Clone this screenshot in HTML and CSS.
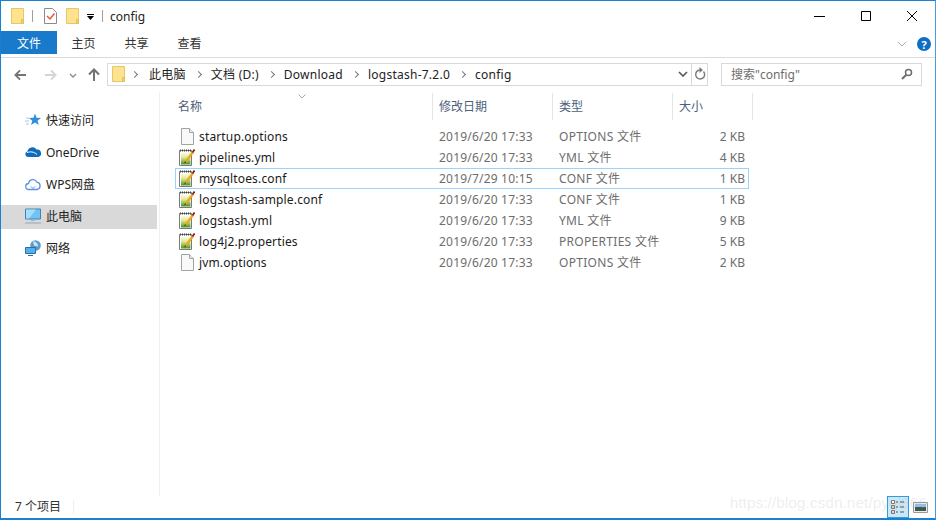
FILE: index.html
```html
<!DOCTYPE html>
<html lang="zh-CN">
<head>
  <meta charset="UTF-8" />
  <title>config</title>
  <link rel="stylesheet" href="styles.css">
</head>
<body>
  <svg class="defs" width="0" height="0">
    <defs>
      <linearGradient id="paper" x1="0" y1="0" x2="0" y2="1">
        <stop offset="0" stop-color="#fbfbe6"/>
        <stop offset="0.4" stop-color="#dfe88f"/>
        <stop offset="1" stop-color="#3f9426"/>
      </linearGradient>
    </defs>
    <symbol id="folder" viewBox="0 0 13 16">
      <path d="M.5.500h12v15H.5z" fill="#fde28f" stroke="#e8c766"/>
      <path d="M10.500 11.500h2v4h-2z" fill="#f6d46f" stroke="#e2bd58"/>
    </symbol>
    <symbol id="plain" viewBox="0 0 13 17">
      <path d="M.5.500h8l4 4v12H.5z" fill="#f9f9f9" stroke="#a3a3a3"/>
      <path d="M8.500.5v4h4" fill="#eee" stroke="#a3a3a3"/>
    </symbol>
    <symbol id="note" viewBox="0 0 16 17">
      <path d="M.5 1.500h12v15H.5z" fill="#fff" stroke="#7a7a7a"/>
      <path d="M1 1.500h11" stroke="#444" stroke-dasharray="1 1" stroke-width="2"/>
      <path d="M2 4h9.500v11.500H2z" fill="url(#paper)"/>
      <path d="M6.500 13L14 3" stroke="#eda81f" stroke-width="2.400"/>
      <path d="M6 12l-.8 2.500 2.200-1.200z" fill="#5a3a1a"/>
      <path d="M13.500 3.500L15.500.5" stroke="#8a1f1f" stroke-width="1.800"/>
    </symbol>
  </svg>

  <div class="window">
    <!-- title bar -->
    <div class="titlebar">
      <svg class="ico-folder"><use href="#folder"/></svg>
      <span class="qsep"></span>
      <svg class="ico-check" viewBox="0 0 13 16">
        <path d="M.5.500h8l4 4v11H.5z" fill="#fff" stroke="#8a8a8a"/>
        <path d="M3 8l3 3 4.500-5.500" fill="none" stroke="#e4572e" stroke-width="1.400"/>
      </svg>
      <svg class="ico-folder second"><use href="#folder"/></svg>
      <svg class="ico-drop" viewBox="0 0 7 6">
        <path d="M0 .5h7" stroke="#000"/>
        <path d="M0 2h7L3.500 6z" fill="#000"/>
      </svg>
      <span class="qsep"></span>
      <span class="title">config</span>
      <div class="winbtns">
        <svg viewBox="0 0 12 12"><path d="M0 6.500h11" stroke="#000"/></svg>
        <svg viewBox="0 0 12 12"><path d="M1.500 1.500h9v9h-9z" fill="none" stroke="#000"/></svg>
        <svg viewBox="0 0 12 12"><path d="M1 1l10 10M11 1L1 11" stroke="#000" fill="none"/></svg>
      </div>
    </div>

    <!-- ribbon tabs -->
    <div class="tabs">
      <span class="tab file">文件</span>
      <span class="tab home">主页</span>
      <span class="tab share">共享</span>
      <span class="tab view">查看</span>
      <svg class="collapse" viewBox="0 0 10 6"><path d="M1 1l4 4 4-4" fill="none" stroke="#a6a6a6" stroke-width="1"/></svg>
      <span class="help">?</span>
    </div>

    <!-- address row -->
    <div class="navrow">
      <svg class="arrow" viewBox="0 0 14 12"><path d="M13 6H2M6.500 1L1.500 6l5 5" fill="none" stroke="#737373" stroke-width="2"/></svg>
      <svg class="arrow off" viewBox="0 0 14 12"><path d="M1 6h11M7.500 1l5 5-5 5" fill="none" stroke="#d4d4d4" stroke-width="2"/></svg>
      <svg class="recent" viewBox="0 0 8 5"><path d="M1 1l3 3 3-3" fill="none" stroke="#8a8a8a" stroke-width="1.300"/></svg>
      <svg class="arrow up" viewBox="0 0 12 14"><path d="M6 13V2M1 6.500l5-5 5 5" fill="none" stroke="#737373" stroke-width="2"/></svg>
      <div class="address">
        <svg class="ico-folder"><use href="#folder"/></svg>
        <span class="chev"></span><span class="crumb">此电脑</span>
        <span class="chev"></span><span class="crumb">文档 (D:)</span>
        <span class="chev"></span><span class="crumb">Download</span>
        <span class="chev"></span><span class="crumb">logstash-7.2.0</span>
        <span class="chev"></span><span class="crumb">config</span>
        <svg class="addr-drop" viewBox="0 0 10 6"><path d="M1 1l4 4 4-4" fill="none" stroke="#555" stroke-width="1.600"/></svg>
        <span class="refresh">
          <svg viewBox="0 0 12 14"><path d="M9.500 4.500A4.500 4.500 0 1 1 6 3H8" fill="none" stroke="#7d7d7d" stroke-width="1.500"/><path d="M5.500 0v6L9 3z" fill="#7d7d7d"/></svg>
        </span>
      </div>
      <div class="search">
        <span>搜索"config"</span>
        <svg viewBox="0 0 12 12"><circle cx="7.500" cy="4.500" r="3" fill="none" stroke="#6e6e6e" stroke-width="1.500"/><path d="M5.300 6.700L1 11" stroke="#6e6e6e" stroke-width="2"/></svg>
      </div>
    </div>

    <div class="body">
      <!-- left nav -->
      <nav class="sidebar">
        <div class="navitem">
          <svg viewBox="0 0 16 16"><path d="M10 1.500l1.500 4.300L16 6l-3.500 2.700L13.800 13 10 10.500 6 13l1.300-4.300L4 6l4.500-.2z" fill="#2e8fdc"/><path d="M1 6h3M0 9h4M1 12h3" stroke="#9cc9ec"/></svg>
          <span>快速访问</span>
        </div>
        <div class="navitem">
          <svg viewBox="0 0 16 12"><path d="M3 11a2.800 2.800 0 0 1-.6-5.500A5 5 0 0 1 11.500 3.500 3.800 3.800 0 0 1 13 11z" fill="#0f6cbd"/><path d="M2 6.500c3-1 7-1 10 2" stroke="#fff" fill="none"/></svg>
          <span>OneDrive</span>
        </div>
        <div class="navitem">
          <svg viewBox="0 0 16 13"><path d="M4 12a3 3 0 0 1-.5-6A4.500 4.500 0 0 1 12 4.700 3.700 3.700 0 0 1 12 12z" fill="#fff" stroke="#5b92e5" stroke-width="1.300"/><path d="M6 9l2 2 2-2" fill="none" stroke="#5b92e5"/></svg>
          <span>WPS网盘</span>
        </div>
        <div class="navitem current">
          <svg viewBox="0 0 16 15"><path d="M.5.500h15v10H.5z" fill="#6cc4f7" stroke="#4a7fa8"/><path d="M1 1h10L4 10H1z" fill="#a3defc"/><path d="M6 11h4v1.500H6z" fill="#9fb6c8"/><path d="M0 14.500h16" stroke="#8fa9bd"/></svg>
          <span>此电脑</span>
        </div>
        <div class="navitem">
          <svg viewBox="0 0 16 16"><circle cx="10.500" cy="5.500" r="5.300" fill="#5b9bd0"/><path d="M8 1.500c3 0 5 2 5 5l-4-1z" fill="#cfe6f6"/><path d="M.5 7.500h10v6H.5z" fill="#4fb2ee" stroke="#2f6f9f"/><path d="M3 15.500h5" stroke="#2f6f9f"/></svg>
          <span>网络</span>
        </div>
      </nav>

      <!-- file list -->
      <main class="files">
        <svg class="sort" viewBox="0 0 8 5"><path d="M.5.500L4 4 7.500.5" fill="none" stroke="#a8a8a8"/></svg>
        <div class="head">
          <span>名称</span>
          <span>修改日期</span>
          <span>类型</span>
          <span>大小</span>
        </div>
        <div class="rows">
          <div class="row"><span class="name"><svg class="ico-plain"><use href="#plain"/></svg>startup.options</span><span class="cell">2019/6/20 17:33</span><span class="cell">OPTIONS 文件</span><span class="size">2 KB</span></div>
          <div class="row"><span class="name"><svg class="ico-note"><use href="#note"/></svg>pipelines.yml</span><span class="cell">2019/6/20 17:33</span><span class="cell">YML 文件</span><span class="size">4 KB</span></div>
          <div class="row focused"><span class="name"><svg class="ico-note"><use href="#note"/></svg>mysqltoes.conf</span><span class="cell">2019/7/29 10:15</span><span class="cell">CONF 文件</span><span class="size">1 KB</span></div>
          <div class="row"><span class="name"><svg class="ico-note"><use href="#note"/></svg>logstash-sample.conf</span><span class="cell">2019/6/20 17:33</span><span class="cell">CONF 文件</span><span class="size">1 KB</span></div>
          <div class="row"><span class="name"><svg class="ico-note"><use href="#note"/></svg>logstash.yml</span><span class="cell">2019/6/20 17:33</span><span class="cell">YML 文件</span><span class="size">9 KB</span></div>
          <div class="row"><span class="name"><svg class="ico-note"><use href="#note"/></svg>log4j2.properties</span><span class="cell">2019/6/20 17:33</span><span class="cell">PROPERTIES 文件</span><span class="size">5 KB</span></div>
          <div class="row"><span class="name"><svg class="ico-plain"><use href="#plain"/></svg>jvm.options</span><span class="cell">2019/6/20 17:33</span><span class="cell">OPTIONS 文件</span><span class="size">2 KB</span></div>
        </div>
      </main>
    </div>

    <!-- status bar -->
    <div class="status">
      <span class="count">7 个项目</span>
      <span class="view-btn active">
        <svg viewBox="0 0 16 16"><path d="M1.500 1.500h3v3h-3zM1.500 6.500h3v3h-3zM1.500 11.500h3v3h-3z" fill="#fff" stroke="#777"/><path d="M2.500 8h1M2.500 13h1" stroke="#d33"/><path d="M6 3h2M10 3h4M6 8h2M10 8h4M6 13h2M10 13h4" stroke="#555"/></svg>
      </span>
      <span class="view-btn">
        <svg viewBox="0 0 15 11"><path d="M.5.500h14v10H.5z" fill="#e8eef2" stroke="#999"/><path d="M2 2h11v3H2z" fill="#8cc4ec"/><path d="M2 5h11v4H2z" fill="#3f5a4a"/></svg>
      </span>
    </div>
    <span class="watermark">https://blog.csdn.net/pyql866</span>
  </div>
</body>
</html>
```

FILE: styles.css
```css
* {
  box-sizing: border-box;
}

body {
  margin: 0;
  font-family: "Noto Sans", "Noto Sans CJK SC", sans-serif;
  font-size: 12px;
  color: #1a1a1a;
  background-color: #fff;
}

.defs {
  position: absolute;
}

svg {
  display: block;
  flex: none;
}

/* window frame */
.window {
  position: relative;
  display: flex;
  flex-direction: column;
  width: 936px;
  height: 520px;
  overflow: hidden;
  border: 1px solid #1a80d2;
  border-bottom-width: 2px;
  border-right-color: #4a9ade;
}

/* title bar */
.titlebar {
  display: flex;
  align-items: center;
  height: 30px;
  padding-left: 10px;
}
.ico-folder {
  width: 13px;
  height: 16px;
}
.ico-folder.second {
  margin-left: 9px;
}
.ico-check {
  width: 13px;
  height: 16px;
  margin-left: 11px;
}
.ico-drop {
  width: 7px;
  height: 6px;
  margin-left: 8px;
  margin-top: 2px;
}
.qsep {
  width: 1px;
  height: 12px;
  margin-left: 8px;
  background-color: #a0a0a0;
}
.title {
  margin-left: 7px;
  color: #222;
}
.winbtns {
  display: flex;
  gap: 34px;
  margin-left: auto;
  margin-right: 17px;
}
.winbtns svg {
  width: 12px;
  height: 12px;
}

/* ribbon tabs */
.tabs {
  display: flex;
  align-items: center;
  height: 27px;
  padding-bottom: 3px;
  border-bottom: 1px solid #dadbdc;
}
.tab {
  display: flex;
  align-items: center;
  justify-content: center;
  width: 53px;
  height: 23px;
  color: #333;
}
.tab.file {
  width: 56px;
  color: #fff;
  background-color: #1979ca;
}
.collapse {
  width: 10px;
  height: 6px;
  margin-top: 3px;
  margin-left: auto;
  margin-right: 10px;
}
.help {
  display: flex;
  align-items: center;
  justify-content: center;
  width: 14px;
  height: 14px;
  margin-top: 3px;
  margin-right: 4px;
  border-radius: 50%;
  font-size: 11px;
  font-weight: bold;
  color: #fff;
  background-color: #0e6ec4;
}

/* address row */
.navrow {
  display: flex;
  align-items: center;
  height: 34px;
  padding: 4px 0 6px 13px;
}
.arrow {
  width: 13px;
  height: 12px;
  margin-top: 2px;
}
.arrow.off {
  margin-left: 17px;
}
.recent {
  width: 8px;
  height: 5px;
  margin-top: 2px;
  margin-left: 12px;
}
.arrow.up {
  width: 12px;
  height: 14px;
  margin-left: 11px;
}
.address {
  display: flex;
  align-items: center;
  width: 601px;
  height: 23px;
  margin-left: 7px;
  padding-left: 4px;
  border: 1px solid #d9d9d9;
  color: #222;
}
.crumb {
  letter-spacing: 0.25px;
}
.chev {
  width: 5px;
  height: 5px;
  margin: 0 10px;
  border-top: 1.500px solid #777;
  border-right: 1.500px solid #777;
  transform: rotate(45deg);
}
.ico-folder + .chev {
  margin-left: 7px;
  margin-right: 12px;
}
.addr-drop {
  width: 10px;
  height: 6px;
  margin-left: auto;
  margin-right: 3px;
}
.refresh {
  display: flex;
  align-items: center;
  justify-content: center;
  width: 16px;
  height: 100%;
  border-left: 1px solid #d9d9d9;
}
.refresh svg {
  width: 12px;
  height: 14px;
}
.search {
  display: flex;
  align-items: center;
  justify-content: space-between;
  width: 201px;
  height: 23px;
  margin-left: 13px;
  padding: 0 8px 0 9px;
  border: 1px solid #d9d9d9;
  color: #6d6d6d;
}
.search svg {
  width: 12px;
  height: 12px;
}

/* body */
.body {
  display: flex;
  flex: 1;
  min-height: 0;
}

/* left nav */
.sidebar {
  width: 159px;
  padding-top: 17px;
  border-right: 1px solid #f0f0f0;
}
.navitem {
  display: flex;
  align-items: center;
  width: 156px;
  height: 24px;
  margin-bottom: 8px;
  padding-bottom: 2px;
  padding-left: 24px;
  color: #222;
}
.navitem svg {
  width: 16px;
  height: 16px;
  margin-right: 5px;
}
.navitem.current {
  background-color: #d9d9d9;
}

/* file list */
.files {
  position: relative;
  flex: 1;
  padding-top: 1px;
}
.sort {
  position: absolute;
  top: 2px;
  left: 138px;
  width: 8px;
  height: 5px;
}
.head {
  display: grid;
  grid-template-columns: 273px 120px 120px 80px;
  height: 27px;
}
.head span {
  display: flex;
  align-items: center;
  padding-bottom: 2px;
  padding-left: 6px;
  border-right: 1px solid #e5e5e5;
  color: #4c607a;
}
.head span:first-child {
  padding-left: 18px;
}
.rows {
  width: 574px;
  margin-top: 6px;
  margin-left: 15px;
}
.row {
  display: grid;
  grid-template-columns: 263px 120px 120px 69px;
  align-items: center;
  height: 21px;
  border: 1px solid transparent;
  line-height: 16px;
  color: #6d6d6d;
}
.row.focused {
  border-color: #99d1ff;
}
.name {
  display: flex;
  align-items: center;
  letter-spacing: 0.15px;
  color: #1a1a1a;
}
.cell {
  letter-spacing: 0.2px;
}
.cell + .cell {
  letter-spacing: 0.3px;
}
.ico-plain {
  width: 13px;
  height: 17px;
  margin-left: 5px;
  margin-right: 5px;
}
.ico-note {
  width: 16px;
  height: 17px;
  margin-left: 3px;
  margin-right: 4px;
}
.size {
  padding-right: 3px;
  text-align: right;
}

/* status bar */
.status {
  display: flex;
  align-items: center;
  height: 22px;
  padding-left: 14px;
  color: #333;
}
.count {
  padding-right: 12px;
  border-right: 1px solid #eee;
  line-height: 14px;
}
.view-btn {
  display: flex;
  align-items: center;
  justify-content: center;
  width: 22px;
  height: 22px;
}
.view-btn.active {
  margin-left: auto;
  background-color: #cce8f7;
  border: 1px solid #2a9fe0;
}
.view-btn svg {
  width: 16px;
  height: 16px;
}
.view-btn:last-child {
  margin-right: 4px;
}
.view-btn:last-child svg {
  width: 15px;
  height: 11px;
}

/* csdn watermark */
.watermark {
  position: absolute;
  right: 8px;
  bottom: 6px;
  font-family: "Liberation Sans", sans-serif;
  font-size: 15.500px;
  color: rgba(150, 150, 150, 0.18);
}
```
